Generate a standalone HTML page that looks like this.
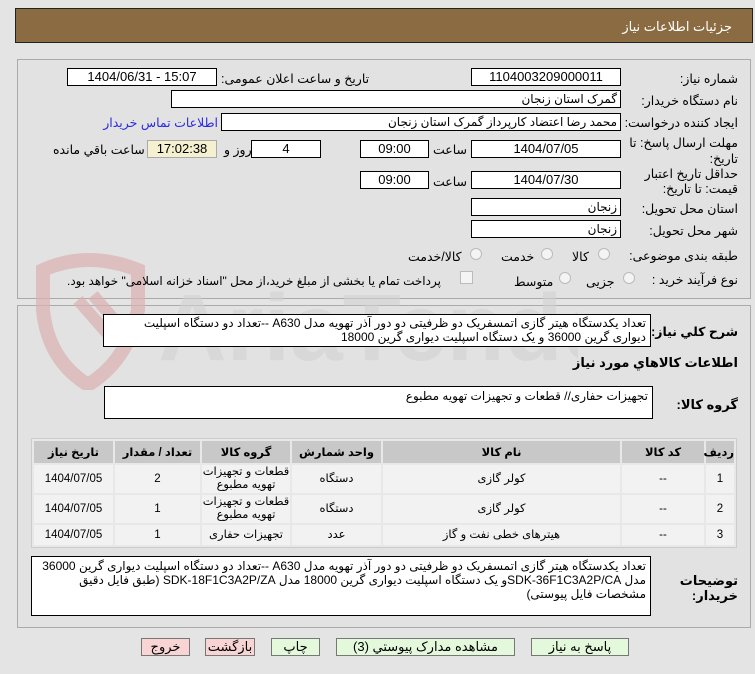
<!DOCTYPE html>
<html><head><meta charset="utf-8"><style>
*{box-sizing:border-box;margin:0;padding:0}
body{width:755px;height:674px;background:#e4e4e4;position:relative;overflow:hidden;font-family:"Liberation Sans","DejaVu Sans",sans-serif;font-size:12px;color:#000}
.a{position:absolute;white-space:nowrap;direction:rtl}
.hdr{left:15px;top:8px;width:738px;height:35px;background:#8b6b42;border:1px solid #222}
.hdr span{position:absolute;right:20px;top:10px;color:#fff;font-size:13px}
.pan{border:1px solid #aaa;background:#e2e2e2}
.box{position:absolute;background:#fff;border:1px solid #000;height:18px;line-height:16px;text-align:center;font-size:13px;white-space:nowrap;overflow:hidden}
.r{text-align:right;padding-right:3px;font-size:12px;direction:rtl}
.lbl{position:absolute;right:17px;text-align:right;font-size:12.5px;direction:rtl;white-space:nowrap}
.rad{position:absolute;width:12px;height:12px;border:1px solid #bbb;border-radius:50%;background:#f4f4f4}
table{position:absolute;left:31px;top:438px;width:706px;border-collapse:separate;border-spacing:2px;background:#e8e8e8;border:1px solid #ccc;table-layout:fixed}
th{background:#c8c8c8;height:22px;font-size:11.5px;padding:0}
td{background:#f2f2f2;text-align:center;font-size:11.5px;line-height:13px;padding:0;white-space:nowrap;overflow:hidden}
.btn{position:absolute;top:638px;height:18px;border:1px solid #777;background:#e4f8dc;text-align:center;line-height:16px;font-size:13px;direction:rtl;white-space:nowrap}
.pk{background:#f8d4d4}
.ta{position:absolute;background:#fff;border:1px solid #000;text-align:right;padding:2px 4px;font-size:12px;line-height:19px;direction:rtl;white-space:normal;overflow:hidden}
</style></head><body>
<div class="a hdr"><span>جزئیات اطلاعات نیاز</span></div>
<div class="a pan" style="left:17px;top:59px;width:734px;height:240px"></div>
<div class="a pan" style="left:17px;top:305px;width:734px;height:323px"></div>
<svg class="a" style="left:18px;top:250px;direction:ltr" width="560" height="140"><path d="M25 20 Q70 0 120 20 L120 60 Q110 110 70 135 Q30 110 25 60 Z" fill="none" stroke="#dcb0b0" stroke-width="14" opacity=".7"/><path d="M60 50 L95 90 M75 45 L105 80" stroke="#dcb0b0" stroke-width="12" opacity=".7"/><text x="140" y="110" font-size="95" font-weight="bold" fill="#d2d2d2" font-family="Liberation Sans" opacity=".6">AriaTender.net</text></svg>

<div class="lbl" style="top:71px">شماره نیاز:</div>
<div class="box" style="left:471px;top:68px;width:150px">1104003209000011</div>
<div class="a" style="left:221px;top:71px;font-size:12.5px">تاریخ و ساعت اعلان عمومی:</div>
<div class="box" style="left:67px;top:68px;width:150px">1404/06/31 - 15:07</div>

<div class="lbl" style="top:93px">نام دستگاه خریدار:</div>
<div class="box r" style="left:171px;top:90px;width:450px">گمرک استان زنجان</div>

<div class="lbl" style="top:115px">ایجاد کننده درخواست:</div>
<div class="box r" style="left:221px;top:113px;width:400px">محمد رضا اعتضاد کارپرداز گمرک استان زنجان</div>
<div class="a" style="right:537px;top:115px;color:#2a2ae0;font-size:12.5px">اطلاعات تماس خریدار</div>

<div class="lbl" style="top:135px;line-height:16px">مهلت ارسال پاسخ: تا<br>تاریخ:</div>
<div class="box" style="left:471px;top:140px;width:150px">1404/07/05</div>
<div class="a" style="left:433px;top:142px;font-size:12.5px">ساعت</div>
<div class="box" style="left:360px;top:140px;width:69px">09:00</div>
<div class="box" style="left:251px;top:140px;width:70px">4</div>
<div class="a" style="left:224px;top:142px;font-size:12.5px">روز و</div>
<div class="box" style="left:147px;top:140px;width:70px;background:#f4f0d0;border-color:#aaa">17:02:38</div>
<div class="a" style="left:53px;top:142px;font-size:12.5px">ساعت باقي مانده</div>

<div class="lbl" style="top:167px;line-height:15px">حداقل تاریخ اعتبار<br>قیمت: تا تاریخ:</div>
<div class="box" style="left:471px;top:171px;width:150px">1404/07/30</div>
<div class="a" style="left:433px;top:174px;font-size:12.5px">ساعت</div>
<div class="box" style="left:360px;top:171px;width:69px">09:00</div>

<div class="lbl" style="top:201px">استان محل تحویل:</div>
<div class="box r" style="left:471px;top:198px;width:150px">زنجان</div>
<div class="lbl" style="top:223px">شهر محل تحویل:</div>
<div class="box r" style="left:471px;top:220px;width:150px">زنجان</div>

<div class="lbl" style="top:248px">طبقه بندی موضوعی:</div>
<div class="rad" style="left:598px;top:248px"></div><div class="a" style="left:572px;top:249px;font-size:12.5px">کالا</div>
<div class="rad" style="left:541px;top:248px"></div><div class="a" style="left:501px;top:249px;font-size:12.5px">خدمت</div>
<div class="rad" style="left:470px;top:248px"></div><div class="a" style="left:408px;top:249px;font-size:12.5px">کالا/خدمت</div>

<div class="lbl" style="top:272px">نوع فرآیند خرید :</div>
<div class="rad" style="left:623px;top:272px"></div><div class="a" style="left:586px;top:274px;font-size:12.5px">جزیی</div>
<div class="rad" style="left:559px;top:272px"></div><div class="a" style="left:514px;top:274px;font-size:12.5px">متوسط</div>
<div class="a" style="left:460px;top:271px;width:13px;height:13px;border:1px solid #bbb;background:#f4f4f4"></div>
<div class="a" style="left:67px;top:274px;font-size:12px">پرداخت تمام یا بخشی از مبلغ خرید،از محل "اسناد خزانه اسلامی" خواهد بود.</div>

<div class="lbl" style="top:324px;font-weight:bold">شرح کلي نیاز:</div>
<div class="ta" style="left:103px;top:314px;width:548px;height:33px;line-height:14px;padding-top:1px">تعداد یکدستگاه هیتر گازی اتمسفریک دو ظرفیتی دو دور آذر تهویه مدل A630 --تعداد دو دستگاه اسپلیت دیواری  گرین 36000 و یک دستگاه اسپلیت دیواری گرین 18000</div>
<div class="lbl" style="top:355px;font-weight:bold;font-size:13px">اطلاعات كالاهاي مورد نياز</div>
<div class="lbl" style="top:397px;font-weight:bold;font-size:13px">گروه کالا:</div>
<div class="ta" style="left:104px;top:386px;width:549px;height:33px;line-height:14px">تجهیزات حفاری//  قطعات و تجهیزات تهویه مطبوع</div>

<table dir="rtl" style="height:110px">
<colgroup><col style="width:28px"><col style="width:82px"><col style="width:237px"><col style="width:89px"><col style="width:88px"><col style="width:85px"><col></colgroup>
<tr style="height:22px"><th>ردیف</th><th>کد کالا</th><th>نام کالا</th><th>واحد شمارش</th><th>گروه کالا</th><th>تعداد / مقدار</th><th>تاریخ نیاز</th></tr>
<tr style="height:28px"><td>1</td><td>--</td><td>کولر گازی</td><td>دستگاه</td><td>قطعات و تجهیزات<br>تهویه مطبوع</td><td>2</td><td>1404/07/05</td></tr>
<tr style="height:28px"><td>2</td><td>--</td><td>کولر گازی</td><td>دستگاه</td><td>قطعات و تجهیزات<br>تهویه مطبوع</td><td>1</td><td>1404/07/05</td></tr>
<tr style="height:20px"><td>3</td><td>--</td><td>هیترهای خطی نفت و گاز</td><td>عدد</td><td>تجهیزات حفاری</td><td>1</td><td>1404/07/05</td></tr>
</table>

<div class="lbl" style="top:573px;font-weight:bold;line-height:15px;font-size:13px">توضیحات<br>خریدار:</div>
<div class="ta" style="left:31px;top:556px;width:620px;height:60px;line-height:14px">تعداد یکدستگاه هیتر گازی اتمسفریک دو ظرفیتی دو دور آذر تهویه مدل A630 --تعداد دو دستگاه اسپلیت دیواری  گرین 36000 مدل SDK-36F1C3A2P/CAو یک دستگاه اسپلیت دیواری گرین 18000 مدل SDK-18F1C3A2P/ZA  (طبق فایل دقیق مشخصات فایل پیوستی)</div>

<div class="btn" style="left:531px;width:98px">پاسخ به نیاز</div>
<div class="btn" style="left:336px;width:179px">مشاهده مدارک پیوستي (3)</div>
<div class="btn" style="left:271px;width:49px">چاپ</div>
<div class="btn pk" style="left:205px;width:50px">بازگشت</div>
<div class="btn pk" style="left:141px;width:49px">خروج</div>
</body></html>
